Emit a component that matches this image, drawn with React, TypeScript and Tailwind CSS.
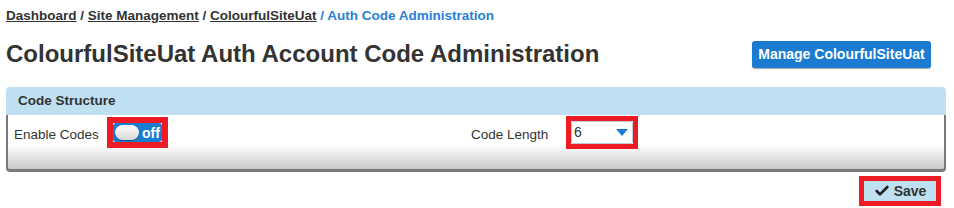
import { Check } from "lucide-react";

function Toggle() {
  return (
    <div className="border-[6px] border-[#ed1c24] w-[61px] h-[31px] flex items-center justify-center">
      <div className="w-[49px] h-[19px] bg-[#1a7bd0] rounded-[3px] flex items-center px-[2px] gap-[3px]">
        <div className="w-[24px] h-[15px] rounded-full bg-gradient-to-b from-white to-[#d6d6d6] shadow-[0_1px_1px_rgba(0,0,0,0.3)]" />
        <span className="text-white font-bold text-[14px] leading-none">off</span>
      </div>
    </div>
  );
}

function Select() {
  return (
    <div className="border-[5px] border-[#ed1c24] w-[72px] h-[33px] flex">
      <div className="flex-1 bg-white border border-[#bcd] rounded-[2px] flex items-center justify-between pl-[2px] pr-[4px]">
        <span className="text-[14px] text-[#333]">6</span>
        <svg width="12" height="7" viewBox="0 0 12 7">
          <path d="M0 0h12L6 7z" fill="#1a7bd0" />
        </svg>
      </div>
    </div>
  );
}

export default function App() {
  return (
    <div className="w-[954px] h-[208px] bg-white text-[#333] font-['Liberation_Sans',Arial,sans-serif] overflow-hidden">
      {/* Breadcrumb */}
      <div className="pl-[6px] pt-[6px] text-[13.5px] font-bold leading-[20px]">
        <a className="underline text-[#333]">Dashboard</a>
        <span> / </span>
        <a className="underline text-[#333]">Site Management</a>
        <span> / </span>
        <a className="underline text-[#333]">ColourfulSiteUat</a>
        <span className="text-[#2a7fd4]"> / Auth Code Administration</span>
      </div>

      {/* Title row */}
      <div className="flex items-center justify-between pl-[6px] pr-[23px] mt-[13px]">
        <h1 className="text-[24px] font-bold leading-[30px]">ColourfulSiteUat Auth Account Code Administration</h1>
        <button className="bg-[#1a7bd0] text-white font-bold text-[14px] h-[27px] w-[179px] rounded-[3px] shadow-[0_1px_1px_rgba(0,0,0,0.35)]">
          Manage ColourfulSiteUat
        </button>
      </div>

      {/* Panel */}
      <div className="ml-[6px] mr-[8px] mt-[18px]">
        <div className="bg-[#bee0f1] h-[28px] rounded-t-[4px] flex items-center pl-[12px] text-[13.5px] font-bold">
          Code Structure
        </div>
        <div className="h-[57px] border-x-2 border-b-[3px] border-[#7a7a7a] rounded-b-[4px] bg-[linear-gradient(to_bottom,#fff_0%,#fff_55%,#c8c8c8_100%)] flex pt-[2px]">
          <div className="w-[463px] flex items-start pl-[6px]">
            <span className="text-[13.5px] w-[93px] mt-[8px]">Enable Codes</span>
            <Toggle />
          </div>
          <div className="flex items-start">
            <span className="text-[13.5px] w-[95px] mt-[8px]">Code Length</span>
            <div className="-mt-[1px]">
              <Select />
            </div>
          </div>
        </div>
      </div>

      {/* Save */}
      <div className="flex justify-end pr-[13px] mt-[4px]">
        <div className="border-[5px] border-[#ed1c24] w-[82px] h-[30px] flex">
          <button className="flex-1 bg-[#bee0f1] flex items-center justify-center gap-[4px] text-[14px] font-bold text-[#333]">
            <Check size={16} strokeWidth={4} className="text-[#222]" />
            Save
          </button>
        </div>
      </div>
    </div>
  );
}
